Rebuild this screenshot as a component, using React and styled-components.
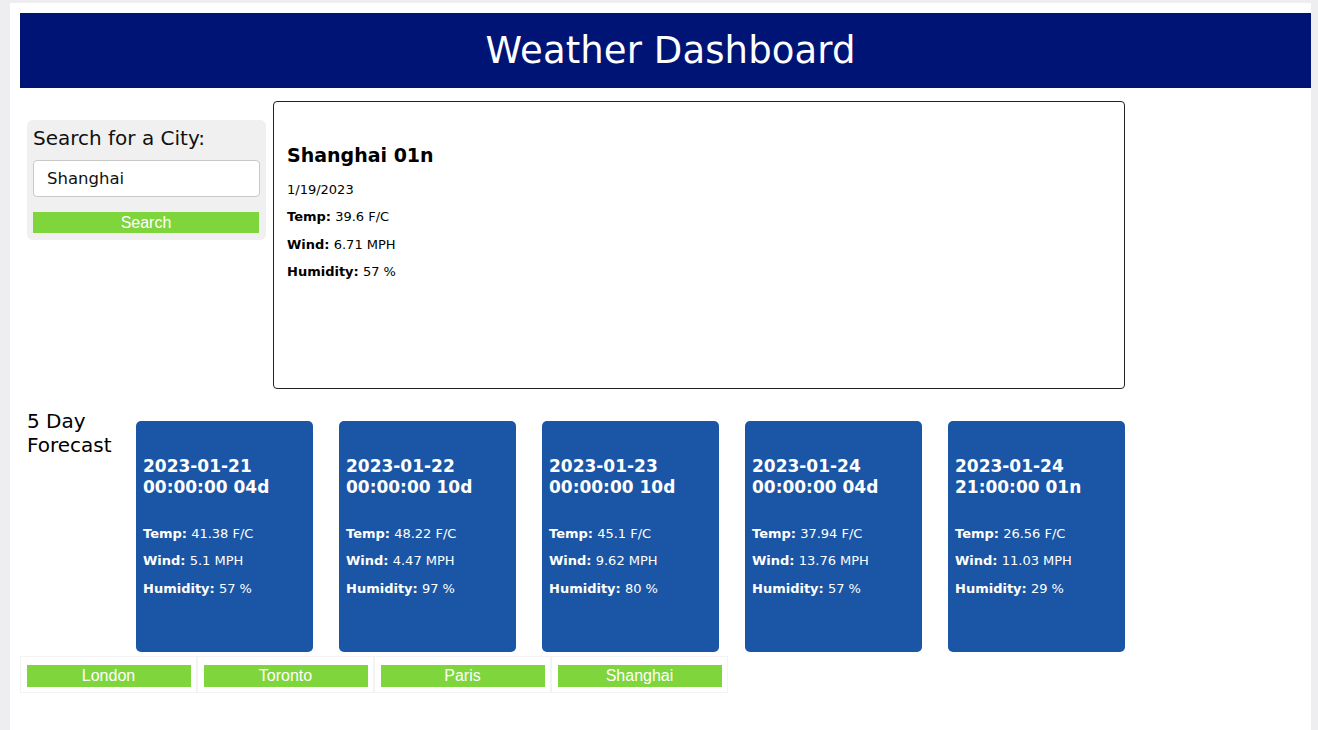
import React from "react";
import styled, { createGlobalStyle } from "styled-components";

const Global = createGlobalStyle`
  html, body { margin: 0; padding: 0; }
  body {
    background: #eeeef1;
    font-family: "DejaVu Sans", Verdana, sans-serif;
    color: #000;
  }
`;

const Page = styled.div`
  margin: 3px 7px 0 10px;
  background: #fff;
  min-height: 727px;
  padding: 10px 0 0 10px;
  box-sizing: border-box;
`;

const Header = styled.header`
  height: 75px;
  background: #001476;
  display: flex;
  align-items: center;
  justify-content: center;
`;

const Title = styled.h1`
  margin: 0 0 0 10px;
  color: #fff;
  font-weight: 400;
  font-size: 37px;
  letter-spacing: 0.1px;
`;

const Main = styled.div`
  display: flex;
  align-items: flex-start;
  margin-top: 13px;
`;

const Sidebar = styled.div`
  padding: 19px 7px 0 7px;
`;

const SearchPanel = styled.form`
  width: 239px;
  height: 120px;
  box-sizing: border-box;
  background: #f0f0f0;
  border-radius: 6px;
  padding: 6px 6px;
  display: flex;
  flex-direction: column;
`;

const SearchLabel = styled.label`
  font-size: 20px;
  line-height: 24px;
  color: #111;
`;

const Input = styled.input`
  margin-top: 10px;
  height: 37px;
  box-sizing: border-box;
  border: 1px solid #c9c9c9;
  border-radius: 4px;
  padding: 0 13px;
  font-family: "DejaVu Sans", Verdana, sans-serif;
  font-size: 16.5px;
  color: #111;
  background: #fff;
  outline: none;
`;

const GreenButton = styled.button`
  background: #7fd53c;
  color: #fff;
  border: none;
  padding: 0;
  font-family: "Liberation Sans", Arial, sans-serif;
  font-size: 16px;
  height: ${(p) => p.$h || 22}px;
  width: ${(p) => p.$w || 164}px;
  cursor: pointer;
`;

const SearchButton = styled(GreenButton)`
  margin-top: 15px;
`;

const CurrentCard = styled.section`
  width: 852px;
  height: 288px;
  box-sizing: border-box;
  border: 1.5px solid #222;
  border-radius: 4px;
  padding: 42px 13px 0 13px;
`;

const CityTitle = styled.h2`
  margin: 0 0 10px 0;
  font-size: 19px;
  line-height: 22px;
  font-weight: 700;
`;

const Line = styled.p`
  margin: 0;
  font-size: 13px;
  line-height: 27.3px;
`;

const ForecastRow = styled.div`
  display: flex;
  align-items: flex-start;
  margin-top: 20px;
`;

const ForecastLabel = styled.h3`
  margin: 0;
  width: 109px;
  padding-left: 7px;
  box-sizing: content-box;
  font-weight: 400;
  font-size: 20px;
  line-height: 24px;
`;

const Cards = styled.div`
  display: flex;
  gap: 26px;
  margin-top: 12px;
`;

const DayCard = styled.div`
  width: 177px;
  height: 231px;
  box-sizing: border-box;
  background: #1a56a5;
  border-radius: 5px;
  color: #fff;
  padding: 35px 7px 0 7px;
`;

const DayTitle = styled.h4`
  margin: 0 0 22px 0;
  font-size: 17px;
  line-height: 21px;
  font-weight: 700;
`;

const CityRow = styled.div`
  display: flex;
  margin-top: 4px;
`;

const CityCell = styled.div`
  width: 177px;
  height: 37px;
  box-sizing: border-box;
  border: 1px solid #f3f3f3;
  display: flex;
  align-items: center;
  justify-content: center;
  padding-top: 2px;
`;

const Detail = ({ label, value }) => (
  <Line>
    <b>{label}:</b> {value}
  </Line>
);

const forecast = [
  { d: "2023-01-21", t: "00:00:00 04d", temp: "41.38", wind: "5.1", hum: "57" },
  { d: "2023-01-22", t: "00:00:00 10d", temp: "48.22", wind: "4.47", hum: "97" },
  { d: "2023-01-23", t: "00:00:00 10d", temp: "45.1", wind: "9.62", hum: "80" },
  { d: "2023-01-24", t: "00:00:00 04d", temp: "37.94", wind: "13.76", hum: "57" },
  { d: "2023-01-24", t: "21:00:00 01n", temp: "26.56", wind: "11.03", hum: "29" },
];

const cities = ["London", "Toronto", "Paris", "Shanghai"];

export default function App() {
  return (
    <>
      <Global />
      <Page>
        <Header>
          <Title>Weather Dashboard</Title>
        </Header>
        <Main>
          <Sidebar>
            <SearchPanel onSubmit={(e) => e.preventDefault()}>
              <SearchLabel>Search for a City:</SearchLabel>
              <Input defaultValue="Shanghai" />
              <SearchButton $w={226} $h={21} type="submit">
                Search
              </SearchButton>
            </SearchPanel>
          </Sidebar>
          <CurrentCard>
            <CityTitle>Shanghai 01n</CityTitle>
            <Line>1/19/2023</Line>
            <Detail label="Temp" value="39.6 F/C" />
            <Detail label="Wind" value="6.71 MPH" />
            <Detail label="Humidity" value="57 %" />
          </CurrentCard>
        </Main>
        <ForecastRow>
          <ForecastLabel>
            5 Day
            <br />
            Forecast
          </ForecastLabel>
          <Cards>
            {forecast.map((f, i) => (
              <DayCard key={i}>
                <DayTitle>
                  {f.d}
                  <br />
                  {f.t}
                </DayTitle>
                <Detail label="Temp" value={`${f.temp} F/C`} />
                <Detail label="Wind" value={`${f.wind} MPH`} />
                <Detail label="Humidity" value={`${f.hum} %`} />
              </DayCard>
            ))}
          </Cards>
        </ForecastRow>
        <CityRow>
          {cities.map((c) => (
            <CityCell key={c}>
              <GreenButton>{c}</GreenButton>
            </CityCell>
          ))}
        </CityRow>
      </Page>
    </>
  );
}
